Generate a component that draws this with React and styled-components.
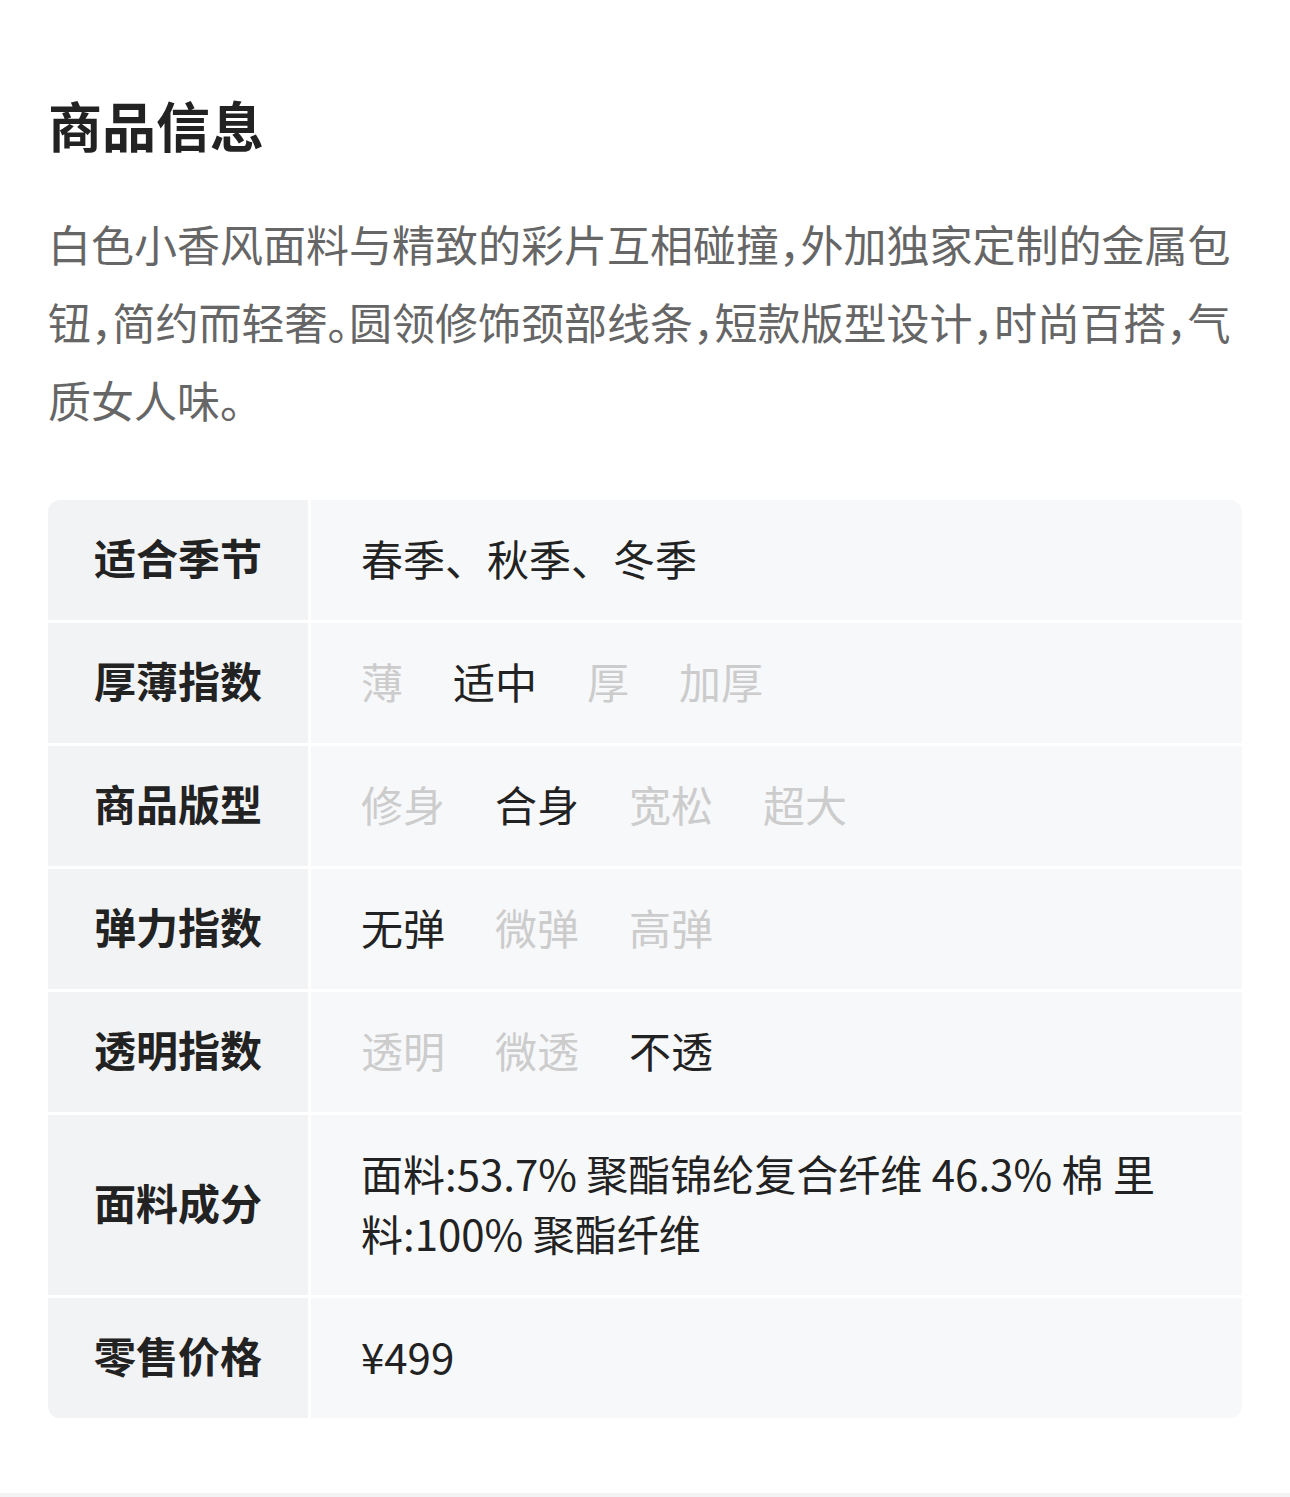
import styled, { createGlobalStyle } from "styled-components";

const GlobalStyle = createGlobalStyle`
  * { box-sizing: border-box; }
  body {
    margin: 0;
    background: #ffffff;
    font-family: "Noto Sans CJK SC", "Noto Sans", sans-serif;
    color: #222222;
  }
`;

const Page = styled.div`
  padding: 93px 48px 0;
`;

const Title = styled.h1`
  margin: 0;
  font-size: 54px;
  line-height: 64px;
  font-weight: 700;
  color: #222222;
`;

const Intro = styled.p`
  margin: 47px 0 0;
  font-size: 43px;
  line-height: 78px;
  color: #666666;
  font-feature-settings: "halt";
`;

const Table = styled.div`
  margin-top: 62px;
  display: flex;
  flex-direction: column;
  gap: 3px;
  border-radius: 12px;
  overflow: hidden;
`;

const Row = styled.div`
  display: grid;
  grid-template-columns: 260px 1fr;
  column-gap: 3px;
`;

const Label = styled.div`
  background: #f2f3f5;
  display: flex;
  align-items: center;
  justify-content: center;
  padding: 27px 0 33px;
  font-size: 42px;
  line-height: 60px;
  font-weight: 700;
  color: #222222;
`;

const Value = styled.div`
  background: #f7f8fa;
  display: flex;
  align-items: center;
  flex-wrap: wrap;
  gap: 50px;
  padding: 28px 50px 32px;
  font-size: 42px;
  line-height: 60px;
  color: #222222;
`;

const Option = styled.span`
  color: ${(p) => (p.$active ? "#222222" : "#cccccc")};
`;

const Footer = styled.div`
  margin: 75px -48px 0;
  height: 4px;
  background: #f2f3f5;
`;

const rows = [
  { label: "适合季节", text: "春季、秋季、冬季" },
  { label: "厚薄指数", options: ["薄", "适中", "厚", "加厚"], active: 1 },
  { label: "商品版型", options: ["修身", "合身", "宽松", "超大"], active: 1 },
  { label: "弹力指数", options: ["无弹", "微弹", "高弹"], active: 0 },
  { label: "透明指数", options: ["透明", "微透", "不透"], active: 2 },
  {
    label: "面料成分",
    text: "面料:53.7% 聚酯锦纶复合纤维 46.3% 棉 里料:100% 聚酯纤维",
  },
  { label: "零售价格", text: "¥499" },
];

function App() {
  return (
    <>
      <GlobalStyle />
      <Page>
        <Title>商品信息</Title>
        <Intro>
          白色小香风面料与精致的彩片互相碰撞，外加独家定制的金属包钮，简约而轻奢。圆领修饰颈部线条，短款版型设计，时尚百搭，气质女人味。
        </Intro>
        <Table>
          {rows.map((row) => (
            <Row key={row.label}>
              <Label>{row.label}</Label>
              <Value>
                {row.options
                  ? row.options.map((o, i) => (
                      <Option key={o} $active={i === row.active}>
                        {o}
                      </Option>
                    ))
                  : <span>{row.text}</span>}
              </Value>
            </Row>
          ))}
        </Table>
        <Footer />
      </Page>
    </>
  );
}

export default App;
